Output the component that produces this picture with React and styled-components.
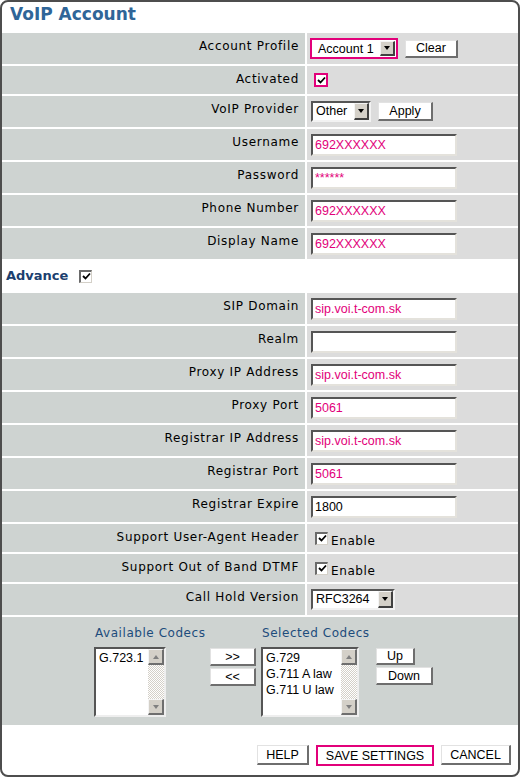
import styled, { createGlobalStyle } from "styled-components";

const GlobalStyle = createGlobalStyle`
  body {
    margin: 0;
    background: #ffffff;
  }
`;

const MAGENTA = "#e2007a";

const Frame = styled.div`
  width: 520px;
  height: 777px;
  box-sizing: border-box;
  border: 2px solid #4d4d4d;
  border-radius: 8px;
  overflow: hidden;
  background: #ffffff;
  display: flex;
  flex-direction: column;
  font-family: "DejaVu Sans", Verdana, sans-serif;
`;

const Header = styled.div`
  height: 31px;
  flex: none;
  box-sizing: border-box;
  padding: 2px 0 0 8px;
`;

const Title = styled.h1`
  margin: 0;
  font-size: 17px;
  line-height: 20px;
  font-weight: bold;
  color: #2f6598;
`;

const Section = styled.div`
  display: flex;
  flex-direction: column;
  gap: 2px;
  flex: none;
`;

const Row = styled.div`
  display: grid;
  grid-template-columns: 303px 1fr;
  column-gap: 2px;
  height: ${(p) => p.$h || 31}px;
`;

const Label = styled.div`
  background: #ced3d1;
  text-align: right;
  box-sizing: border-box;
  padding: 6px 6px 0 0;
  font-size: 12px;
  line-height: 14px;
  letter-spacing: 0.7px;
  color: #000000;
  white-space: nowrap;
`;

const Value = styled.div`
  background: #dcdcdc;
  display: flex;
  align-items: center;
  gap: 7px;
  padding-left: 4px;
`;

const TextInput = styled.input`
  width: 146px;
  height: 22px;
  box-sizing: border-box;
  margin: 0;
  padding: 0 2px;
  border-style: solid;
  border-width: 2px;
  border-color: #555555 #e4e2dc #e4e2dc #555555;
  background: #ffffff;
  font-family: "Liberation Sans", Arial, sans-serif;
  font-size: 12.5px;
  color: ${(p) => (p.$plain ? "#000000" : MAGENTA)};
  outline: none;
`;

const SelectBox = styled.div`
  display: inline-flex;
  align-items: stretch;
  box-sizing: border-box;
  width: ${(p) => p.$w}px;
  height: ${(p) => p.$hgt || 21}px;
  background: #ffffff;
  border-style: solid;
  border-width: ${(p) => (p.$bare ? 0 : 2)}px;
  border-color: #555555 #f2f2f2 #f2f2f2 #555555;
  padding: ${(p) => (p.$bare ? "1px 1px 1px 0" : 0)};
`;

const SelectText = styled.span`
  flex: 1;
  padding-left: ${(p) => (p.$bare ? 6 : 3)}px;
  font-family: "Liberation Sans", Arial, sans-serif;
  font-size: 12.5px;
  line-height: 17px;
  color: #000000;
  white-space: nowrap;
`;

const SelectArrow = styled.span`
  width: 15px;
  box-sizing: border-box;
  background: #d4d0c8;
  border-style: solid;
  border-width: 1px 2px 2px 1px;
  border-color: #f4f4f4 #404040 #404040 #f4f4f4;
  display: flex;
  align-items: center;
  justify-content: center;
`;

const Triangle = styled.span`
  width: 0;
  height: 0;
  border-left: 3.5px solid transparent;
  border-right: 3.5px solid transparent;
  border-${(p) => (p.$up ? "bottom" : "top")}: 4px solid ${(p) => p.$color || "#000000"};
`;

const HighlightFrame = styled.div`
  box-sizing: border-box;
  border: 2px solid ${MAGENTA};
  margin-left: -1px;
  display: flex;
`;

const Button = styled.button`
  width: ${(p) => p.$w}px;
  height: ${(p) => p.$hgt || 18}px;
  box-sizing: border-box;
  margin: 0;
  padding: 0;
  background: #ffffff;
  border-style: solid;
  border-width: ${(p) => (p.$highlight ? "2px" : "1px 2px 2px 1px")};
  border-color: ${(p) =>
    p.$highlight ? MAGENTA : "#e2e2e2 #6e6e6e #6e6e6e #e2e2e2"};
  font-family: "Liberation Sans", Arial, sans-serif;
  font-size: 12.5px;
  line-height: 14px;
  color: #000000;
  cursor: pointer;
`;

const CheckBox = styled.span`
  display: inline-flex;
  align-items: center;
  justify-content: center;
  flex: none;
  box-sizing: border-box;
  width: ${(p) => (p.$highlight ? 14 : 13)}px;
  height: ${(p) => (p.$highlight ? 14 : 13)}px;
  background: #ffffff;
  border-style: solid;
  border-width: ${(p) => (p.$highlight ? "2px" : "2px 1px 1px 2px")};
  border-color: ${(p) =>
    p.$highlight ? MAGENTA : "#6a6a6a #d4d0c8 #d4d0c8 #6a6a6a"};
  margin-left: ${(p) => p.$offset}px;
`;

const EnableText = styled.span`
  font-size: 12px;
  line-height: 14px;
  letter-spacing: 0.6px;
  padding-top: 6px;
  margin-left: -4px;
`;

const AdvanceBar = styled.div`
  height: 34px;
  flex: none;
  display: flex;
  align-items: center;
  gap: 11px;
  padding-left: 4px;
`;

const AdvanceTitle = styled.span`
  font-size: 13px;
  font-weight: bold;
  color: #1c3f6e;
  line-height: 16px;
`;

const Codecs = styled.div`
  margin-top: 2px;
  height: 108px;
  flex: none;
  box-sizing: border-box;
  background: #ced3d1;
  padding: 9px 0 0 92px;
  display: grid;
  grid-template-columns: 116px 51px 115px auto;
  grid-template-rows: 14px 70px;
  row-gap: 7px;
`;

const CodecLabel = styled.div`
  grid-column: ${(p) => p.$col};
  grid-row: 1;
  font-size: 12px;
  line-height: 14px;
  letter-spacing: 0.55px;
  color: #1d4c7c;
  padding-left: 1px;
  white-space: nowrap;
`;

const ButtonStack = styled.div`
  grid-row: 2;
  display: flex;
  flex-direction: column;
  gap: 2px;
  padding-top: 1px;
`;

const ListBox = styled.div`
  grid-row: 2;
  width: ${(p) => p.$w}px;
  height: 70px;
  box-sizing: border-box;
  display: flex;
  background: #ffffff;
  border-style: solid;
  border-width: 2px;
  border-color: #555555 #eeeeee #eeeeee #555555;
`;

const ListItems = styled.div`
  flex: 1;
  padding: 1px 0 0 3px;
  font-family: "Liberation Sans", Arial, sans-serif;
  font-size: 12.5px;
  line-height: 16px;
  color: #000000;
  white-space: nowrap;
`;

const ScrollBar = styled.div`
  width: 16px;
  display: flex;
  flex-direction: column;
`;

const ScrollButton = styled.span`
  width: 16px;
  height: 16px;
  box-sizing: border-box;
  background: #d4d0c8;
  border-style: solid;
  border-width: 1px 2px 2px 1px;
  border-color: #f4f4f4 #6e6e6e #6e6e6e #f4f4f4;
  display: flex;
  align-items: center;
  justify-content: center;
`;

const ScrollTrack = styled.span`
  flex: 1;
  background-image: repeating-conic-gradient(#d4d0c8 0 25%, #ffffff 0 50%);
  background-size: 2px 2px;
`;

const Footer = styled.div`
  height: 50px;
  flex: none;
  box-sizing: border-box;
  display: flex;
  justify-content: flex-end;
  align-items: flex-start;
  gap: 7px;
  padding: 20px 7px 0 0;
`;

function Select({ width, text, bare, height }) {
  return (
    <SelectBox $w={width} $bare={bare} $hgt={height}>
      <SelectText $bare={bare}>{text}</SelectText>
      <SelectArrow>
        <Triangle />
      </SelectArrow>
    </SelectBox>
  );
}

function Check({ highlight, offset = 4 }) {
  return (
    <CheckBox $highlight={highlight} $offset={offset}>
      <svg width="9" height="9" viewBox="0 0 9 9">
        <polyline
          points="1,4 3.5,6.5 8,1.5"
          fill="none"
          stroke="#000000"
          strokeWidth="1.8"
        />
      </svg>
    </CheckBox>
  );
}

function List({ width, items }) {
  return (
    <ListBox $w={width}>
      <ListItems>
        {items.map((item) => (
          <div key={item}>{item}</div>
        ))}
      </ListItems>
      <ScrollBar>
        <ScrollButton>
          <Triangle $up $color="#808080" />
        </ScrollButton>
        <ScrollTrack />
        <ScrollButton>
          <Triangle $color="#808080" />
        </ScrollButton>
      </ScrollBar>
    </ListBox>
  );
}

function Field({ label, value, plain }) {
  return (
    <Row>
      <Label>{label}</Label>
      <Value>
        <TextInput readOnly value={value} $plain={plain} />
      </Value>
    </Row>
  );
}

export default function App() {
  return (
    <>
      <GlobalStyle />
      <Frame>
        <Header>
          <Title>VoIP Account</Title>
        </Header>

        <Section>
          <Row>
            <Label>Account Profile</Label>
            <Value>
              <HighlightFrame>
                <Select width={84} height={17} text="Account 1" bare />
              </HighlightFrame>
              <Button $w={53}>Clear</Button>
            </Value>
          </Row>
          <Row $h={28}>
            <Label>Activated</Label>
            <Value>
              <Check highlight offset={3} />
            </Value>
          </Row>
          <Row>
            <Label>VoIP Provider</Label>
            <Value>
              <Select width={60} text="Other" />
              <Button $w={55} $hgt={19}>
                Apply
              </Button>
            </Value>
          </Row>
          <Field label="Username" value="692XXXXXX" />
          <Field label="Password" value="******" />
          <Field label="Phone Number" value="692XXXXXX" />
          <Field label="Display Name" value="692XXXXXX" />
        </Section>

        <AdvanceBar>
          <AdvanceTitle>Advance</AdvanceTitle>
          <Check offset={0} />
        </AdvanceBar>

        <Section>
          <Field label="SIP Domain" value="sip.voi.t-com.sk" />
          <Field label="Realm" value="" />
          <Field label="Proxy IP Address" value="sip.voi.t-com.sk" />
          <Field label="Proxy Port" value="5061" />
          <Field label="Registrar IP Address" value="sip.voi.t-com.sk" />
          <Field label="Registrar Port" value="5061" />
          <Field label="Registrar Expire" value="1800" plain />
          <Row $h={28}>
            <Label>Support User-Agent Header</Label>
            <Value>
              <Check />
              <EnableText>Enable</EnableText>
            </Value>
          </Row>
          <Row $h={28}>
            <Label>Support Out of Band DTMF</Label>
            <Value>
              <Check />
              <EnableText>Enable</EnableText>
            </Value>
          </Row>
          <Row>
            <Label>Call Hold Version</Label>
            <Value>
              <Select width={84} text="RFC3264" />
            </Value>
          </Row>
        </Section>

        <Codecs>
          <CodecLabel $col={1}>Available Codecs</CodecLabel>
          <CodecLabel $col={3}>Selected Codecs</CodecLabel>
          <List width={72} items={["G.723.1"]} />
          <ButtonStack>
            <Button $w={46}>&gt;&gt;</Button>
            <Button $w={46}>&lt;&lt;</Button>
          </ButtonStack>
          <List width={98} items={["G.729", "G.711 A law", "G.711 U law"]} />
          <ButtonStack>
            <Button $w={39} $hgt={17}>
              Up
            </Button>
            <Button $w={57}>Down</Button>
          </ButtonStack>
        </Codecs>

        <Footer>
          <Button $w={52} $hgt={20}>
            HELP
          </Button>
          <Button $w={118} $hgt={21} $highlight>
            SAVE SETTINGS
          </Button>
          <Button $w={70} $hgt={20}>
            CANCEL
          </Button>
        </Footer>
      </Frame>
    </>
  );
}
